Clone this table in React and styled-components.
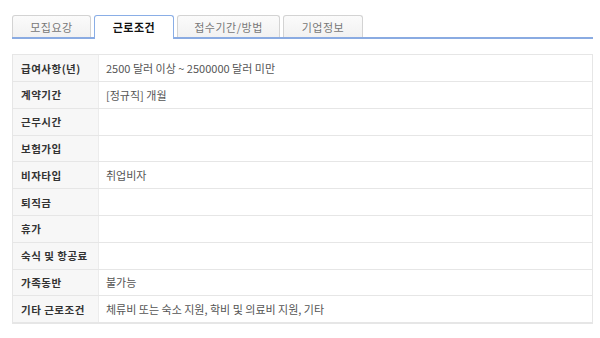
import React from 'react';
import styled, { createGlobalStyle } from 'styled-components';

const tabs = [
  { name: '모집요강', width: 79 },
  { name: '근로조건', width: 80 },
  { name: '접수기간/방법', width: 103 },
  { name: '기업정보', width: 80 },
];
const activeTab = 1;

const rows = [
  { label: '급여사항(년)', value: '2500 달러 이상 ~ 2500000 달러 미만' },
  { label: '계약기간', value: '[정규직] 개월' },
  { label: '근무시간', value: '' },
  { label: '보험가입', value: '' },
  { label: '비자타입', value: '취업비자' },
  { label: '퇴직금', value: '' },
  { label: '휴가', value: '' },
  { label: '숙식 및 항공료', value: '' },
  { label: '가족동반', value: '불가능' },
  { label: '기타 근로조건', value: '체류비 또는 숙소 지원, 학비 및 의료비 지원, 기타' },
];

const App = () => {
  return (
    <>
      <GlobalStyle />
      <Page>
        <TabBar>
          {tabs.map((t, i) => (
            <Tab key={t.name} active={i === activeTab} width={t.width}>{t.name}</Tab>
          ))}
        </TabBar>
        <Table>
          {rows.map((r) => (
            <Row key={r.label}>
              <Label>{r.label}</Label>
              <Value>{r.value}</Value>
            </Row>
          ))}
        </Table>
      </Page>
    </>
  );
};

export default App;

const GlobalStyle = createGlobalStyle`
  html, body {
    margin: 0;
    padding: 0;
    background: #ffffff;
  }
  body {
    font-family: "Noto Sans CJK KR", "Liberation Sans", sans-serif;
    font-size: 11px;
    color: #444;
  }
`
const Page = styled.div`
  width: 600px;
  height: 338px;
  padding: 13px 7px 0 12px;
  box-sizing: border-box;
`
const TabBar = styled.div`
  display: flex;
  align-items: flex-end;
  gap: 3px;
  height: 24px;
  border-bottom: 2px solid #8aabe2;
`
const Tab = styled.div`
  width: ${({width}) => width}px;
  height: ${({active}) => active ? 24 : 22}px;
  box-sizing: border-box;
  display: flex;
  justify-content: center;
  align-items: center;
  font-size: 11px;
  letter-spacing: 0.5px;
  border: 1px solid ${({active}) => active ? '#8aaee6' : '#d3d3d3'};
  border-bottom: none;
  border-radius: 3px 3px 0 0;
  color: ${({active}) => active ? '#111' : '#777'};
  font-weight: ${({active}) => active ? 700 : 400};
  background: ${({active}) => active ? '#ffffff' : 'linear-gradient(#fbfbfb, #f1f1f1)'};
  margin-bottom: ${({active}) => active ? '-2px' : '0'};
  padding-bottom: ${({active}) => active ? '2px' : '0'};
`
const Table = styled.div`
  margin-top: 15px;
  border: 1px solid #e6e6e6;
  border-bottom-width: 2px;
  display: flex;
  flex-direction: column;
`
const Row = styled.div`
  display: grid;
  grid-template-columns: 86px 1fr;
  height: 26.8px;
  border-top: 1px solid #e6e6e6;
  box-sizing: border-box;
  &:first-child {
    border-top: none;
    height: 26px;
  }
`
const Label = styled.div`
  background: #f7f7f7;
  border-right: 1px solid #ececec;
  display: flex;
  align-items: center;
  padding-left: 8px;
  font-weight: 700;
  font-size: 10.5px;
  color: #333;
  letter-spacing: 0.5px;
  white-space: nowrap;
`
const Value = styled.div`
  display: flex;
  align-items: center;
  padding-left: 7px;
  font-size: 11px;
  color: #555;
  white-space: nowrap;
`
